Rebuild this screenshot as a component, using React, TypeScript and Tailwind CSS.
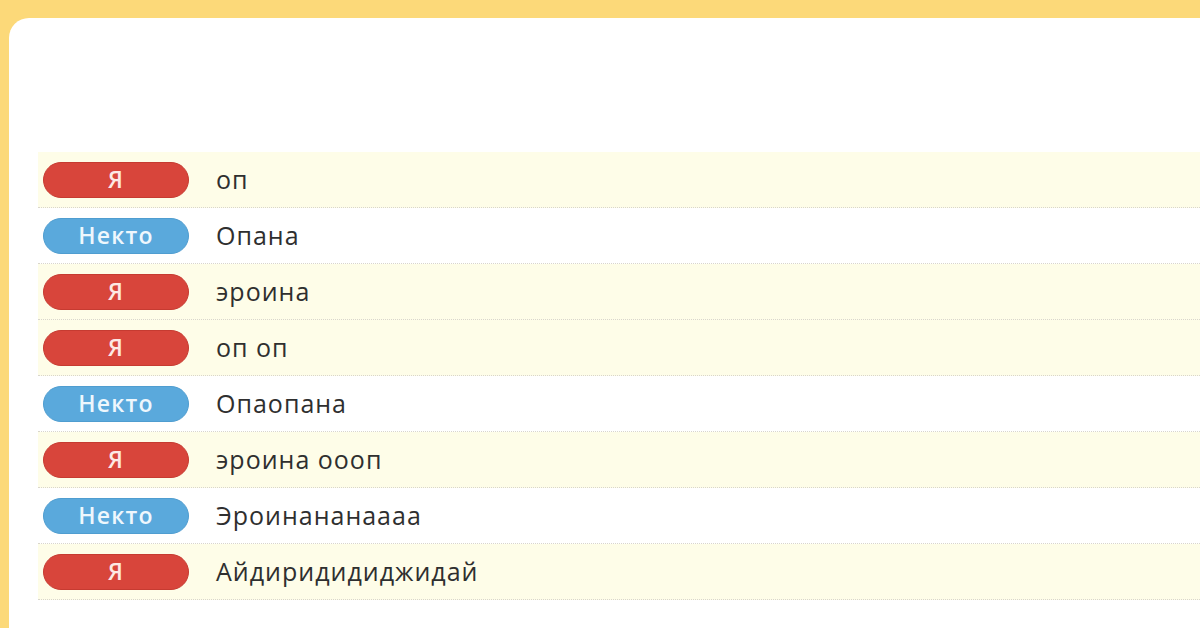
import React from "react";

type Author = "me" | "stranger";

interface Message {
  author: Author;
  text: string;
}

const messages: Message[] = [
  { author: "me", text: "оп" },
  { author: "stranger", text: "Опана" },
  { author: "me", text: "эроина" },
  { author: "me", text: "оп оп" },
  { author: "stranger", text: "Опаопана" },
  { author: "me", text: "эроина оооп" },
  { author: "stranger", text: "Эроинананаааа" },
  { author: "me", text: "Айдиридидиджидай" },
];

const Badge = ({ author }: { author: Author }) => {
  const isMe = author === "me";
  return (
    <span
      className={`flex h-[36px] w-[146px] shrink-0 items-center justify-center rounded-full border text-[23px] font-semibold tracking-[1.2px] ${
        isMe
          ? "border-[#c63b31] bg-[#d8453b] text-[#fde8e4]"
          : "border-[#4f9dd0] bg-[#5aa9dc] text-[#eef7fd]"
      }`}
    >
      {isMe ? "Я" : "Некто"}
    </span>
  );
};

const MessageRow = ({ message }: { message: Message }) => {
  const isMe = message.author === "me";
  return (
    <div
      className={`flex h-[56px] items-center gap-[27px] border-b border-dotted border-[#d9d6cc] pl-[5px] ${
        isMe ? "bg-[#fefde8]" : "bg-white"
      }`}
    >
      <Badge author={message.author} />
      <span className="text-[25px] tracking-[1px] text-[#2f2f2f]">{message.text}</span>
    </div>
  );
};

export default function App() {
  return (
    <div
      className="h-[628px] w-[1200px] overflow-hidden bg-[#fcd979] pl-[9px] pt-[18px]"
      style={{ fontFamily: '"Open Sans", "Noto Sans", sans-serif' }}
    >
      <div className="h-full rounded-tl-[20px] bg-white pl-[29px] pt-[134px]">
        {messages.map((message, index) => (
          <MessageRow key={index} message={message} />
        ))}
      </div>
    </div>
  );
}
